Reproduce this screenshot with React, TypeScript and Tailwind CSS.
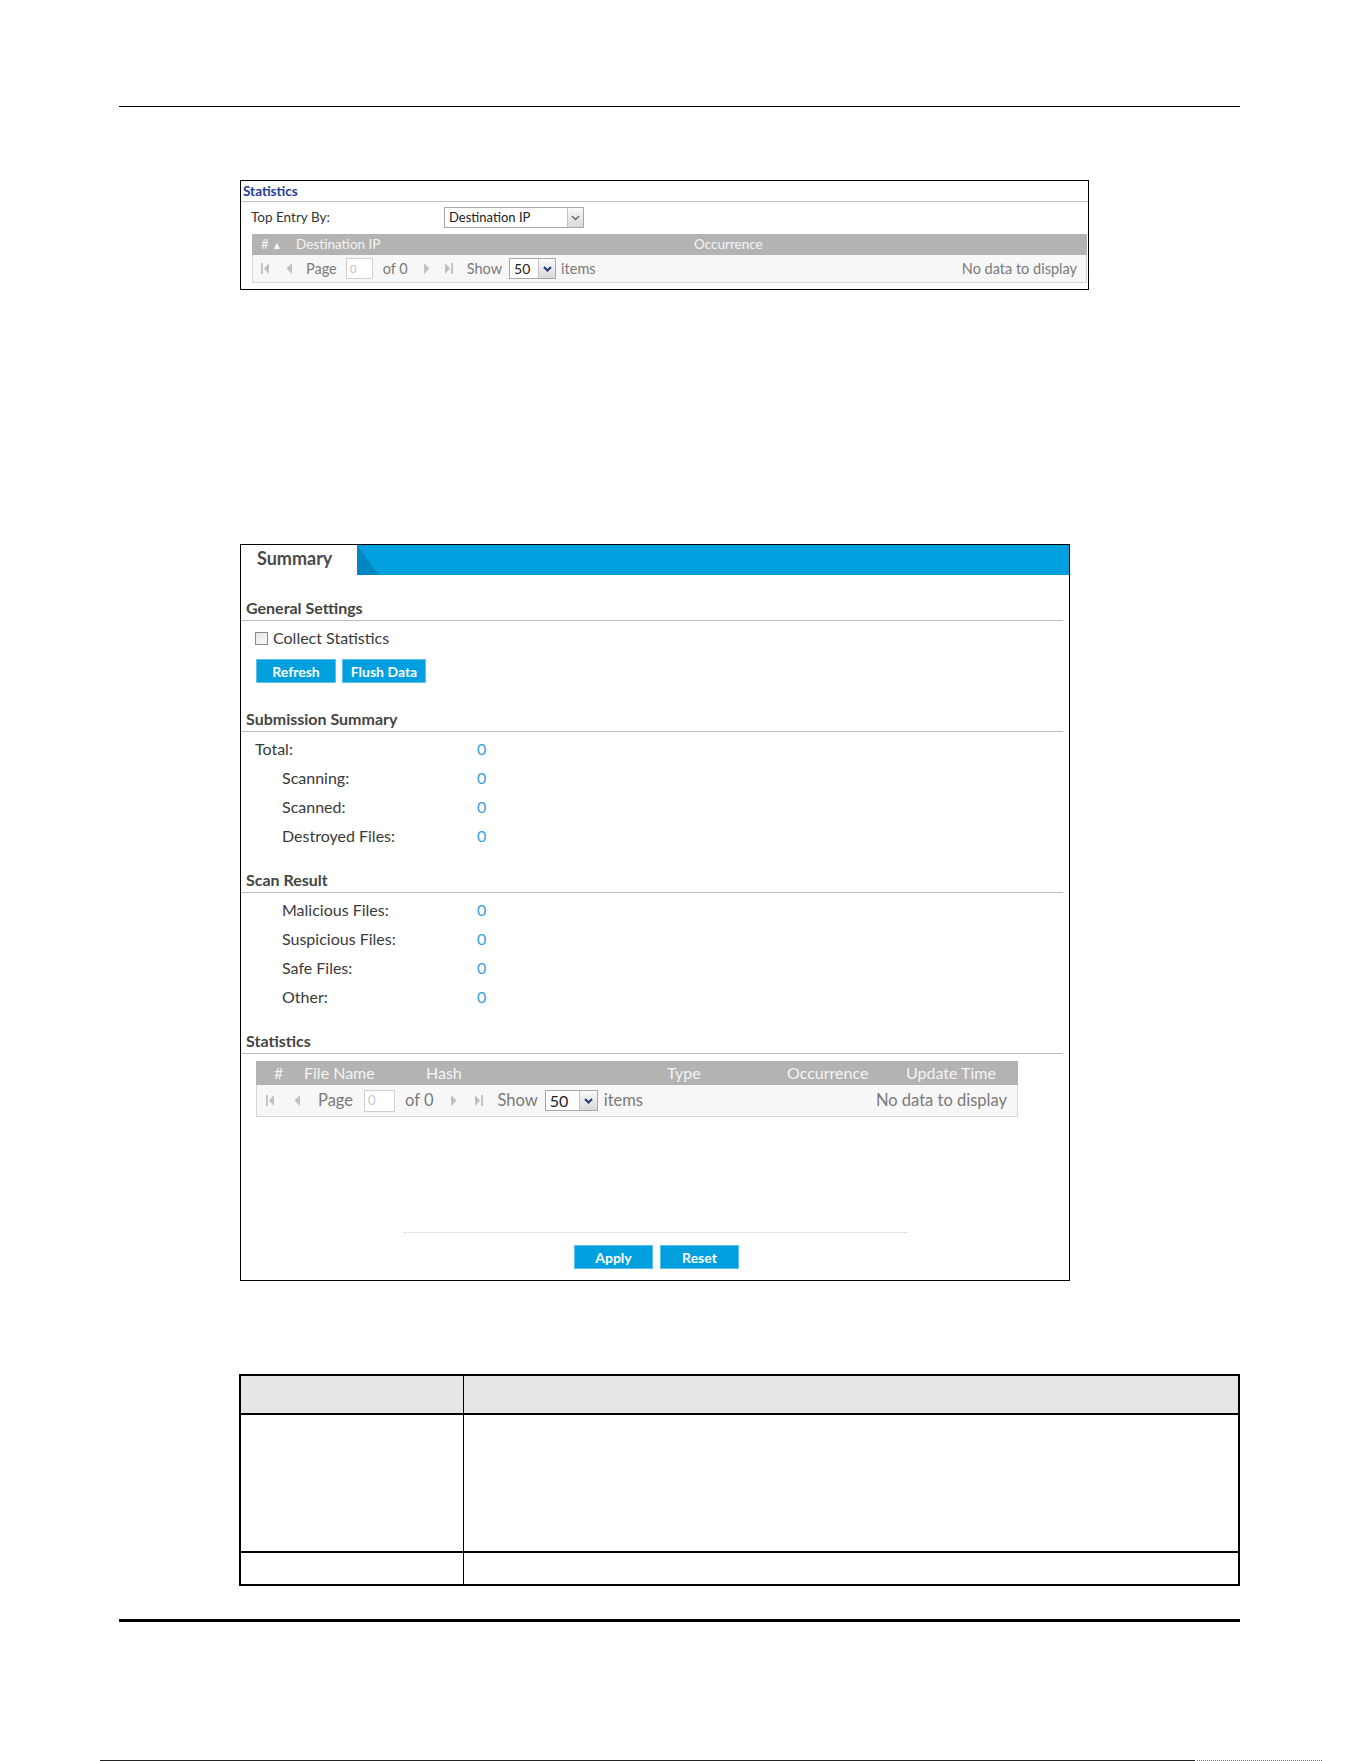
import React from "react";

// Pager arrows, drawn small and greyed out (no data to page through).
function FirstIcon() {
  return (
    <svg width="8" height="11" viewBox="0 0 8 11">
      <rect x="0" y="0" width="1.8" height="11" fill="currentColor" />
      <path d="M8 0 L3 5.5 L8 11 Z" fill="currentColor" />
    </svg>
  );
}
function PrevIcon() {
  return (
    <svg width="6" height="11" viewBox="0 0 6 11">
      <path d="M6 0 L0.5 5.5 L6 11 Z" fill="currentColor" />
    </svg>
  );
}
function NextIcon() {
  return (
    <svg width="6" height="11" viewBox="0 0 6 11">
      <path d="M0 0 L5.5 5.5 L0 11 Z" fill="currentColor" />
    </svg>
  );
}
function LastIcon() {
  return (
    <svg width="8" height="11" viewBox="0 0 8 11">
      <path d="M0 0 L5 5.5 L0 11 Z" fill="currentColor" />
      <rect x="6.2" y="0" width="1.8" height="11" fill="currentColor" />
    </svg>
  );
}

function Chevron({ bold }: { bold?: boolean }) {
  return (
    <svg width="9" height="6" viewBox="0 0 9 6">
      <path
        d="M1 1 L4.5 4.5 L8 1"
        fill="none"
        stroke={bold ? "#1d3a78" : "#55657f"}
        strokeWidth={bold ? 2 : 1.4}
      />
    </svg>
  );
}

// Dropdown look-alike: white field plus a shaded arrow button on the right.
function Select({ value, width, arrow, textSize, bold }: { value: string; width: string; arrow: string; textSize: string; bold?: boolean }) {
  return (
    <div className={`flex h-[21px] items-stretch border border-[#a8a8a8] bg-white ${width}`}>
      <span className={`flex flex-1 items-center pl-[4px] text-[#222] ${textSize}`}>{value}</span>
      <span className={`flex items-center justify-center border-l border-[#c4c4c4] bg-gradient-to-b from-[#fafafa] to-[#d9d9d9] ${arrow}`}>
        <Chevron bold={bold} />
      </span>
    </div>
  );
}

function Pager({ big }: { big?: boolean }) {
  if (big) {
    return (
      <div className="flex h-[32px] items-center border-x border-b border-[#d6d6d6] bg-[#f7f7f7] pr-[10px] text-[16.5px] text-[#7a7a7a]">
        <span className="ml-[9px] text-[#c0c0c0]"><FirstIcon /></span>
        <span className="ml-[20px] text-[#c0c0c0]"><PrevIcon /></span>
        <span className="ml-[18px]">Page</span>
        <span className="ml-[11px] flex h-[22px] w-[31px] items-center border border-[#d0d0d0] bg-white pl-[3px] text-[13px] text-[#c4c4c4]">0</span>
        <span className="ml-[10px]">of 0</span>
        <span className="ml-[18px] text-[#c0c0c0]"><NextIcon /></span>
        <span className="ml-[18px] text-[#c0c0c0]"><LastIcon /></span>
        <span className="ml-[14px]">Show</span>
        <div className="ml-[7px]">
          <Select value="50" width="w-[53px]" arrow="w-[18px]" textSize="text-[16px]" bold />
        </div>
        <span className="ml-[6px]">items</span>
        <span className="ml-auto">No data to display</span>
      </div>
    );
  }
  return (
    <div className="flex h-[28px] items-center border-x border-b border-[#d6d6d6] bg-[#f7f7f7] pr-[9px] text-[14.5px] text-[#7a7a7a]">
      <span className="ml-[8px] text-[#c0c0c0]"><FirstIcon /></span>
      <span className="ml-[17px] text-[#c0c0c0]"><PrevIcon /></span>
      <span className="ml-[14px]">Page</span>
      <span className="ml-[9px] flex h-[21px] w-[27px] items-center border border-[#d0d0d0] bg-white pl-[3px] text-[12px] text-[#c4c4c4]">0</span>
      <span className="ml-[10px]">of 0</span>
      <span className="ml-[16px] text-[#c0c0c0]"><NextIcon /></span>
      <span className="ml-[15px] text-[#c0c0c0]"><LastIcon /></span>
      <span className="ml-[14px]">Show</span>
      <div className="ml-[7px]">
        <Select value="50" width="w-[47px]" arrow="w-[17px]" textSize="text-[14px]" bold />
      </div>
      <span className="ml-[5px]">items</span>
      <span className="ml-auto">No data to display</span>
    </div>
  );
}

function Heading({ children, className }: { children: React.ReactNode; className: string }) {
  return (
    <div className={`mr-[6px] flex h-[25px] items-center border-b border-[#bdbdbd] pl-[5px] text-[16px] font-bold text-[#444] ${className}`}>
      {children}
    </div>
  );
}

function CountRow({ label, sub }: { label: string; sub?: boolean }) {
  return (
    <div className="flex h-[29px] items-center text-[16px] text-[#3a3a3a]">
      <span className={sub ? "w-[236px] pl-[41px]" : "w-[236px] pl-[14px]"}>{label}</span>
      <span className="text-[#3aa1dc]">0</span>
    </div>
  );
}

function BlueButton({ children, width }: { children: React.ReactNode; width: string }) {
  return (
    <button className={`flex h-[24px] items-center justify-center border border-[#5ec0ea] bg-[#00a0de] text-[14px] font-bold text-white ${width}`}>
      {children}
    </button>
  );
}

export default function App() {
  return (
    <div className="h-[1761px] w-[1361px] overflow-hidden bg-white font-['Lato','DejaVu_Sans',sans-serif] text-[#333]">
      <div className="pl-[119px] pt-[106px]">
        <div className="h-px w-[1121px] bg-black" />
      </div>

      {/* Top-entry statistics table */}
      <section className="ml-[240px] mt-[73px] h-[110px] w-[849px] border border-black">
        <div className="h-[21px] border-b border-[#c2c2c2] pl-[2px] text-[13.5px] font-bold leading-[20px] text-[#1f3d9c]">
          Statistics
        </div>
        <div className="mt-[5px] flex h-[21px] items-center pl-[10px]">
          <span className="w-[193px] text-[13.5px] text-[#333]">Top Entry By:</span>
          <Select value="Destination IP" width="w-[140px]" arrow="w-[16px]" textSize="text-[13px]" />
        </div>
        <div className="ml-[11px] mr-px mt-[6px]">
          <div className="flex h-[21px] items-center bg-[#b3b3b3] text-[13.5px] text-[#f4f4f4]">
            <span className="ml-[9px]">#</span>
            <span className="ml-[5px] text-[8px]">▲</span>
            <span className="ml-[16px] w-[398px]">Destination IP</span>
            <span>Occurrence</span>
          </div>
          <Pager />
        </div>
      </section>

      {/* Sandbox summary panel */}
      <section className="ml-[240px] mt-[254px] h-[737px] w-[830px] border border-black">
        <div className="flex h-[30px] bg-[#00a0de]">
          <div className="flex w-[116px] items-start bg-white pl-[16px] text-[18px] font-bold text-[#4a4a4a]">
            Summary
          </div>
          <svg width="22" height="30" viewBox="0 0 22 30">
            <path d="M0 0 L22 30 L0 30 Z" fill="#0086c3" />
          </svg>
        </div>

        <Heading className="mt-[21px]">General Settings</Heading>
        <div className="mt-[6px] flex h-[22px] items-center pl-[14px] text-[16px] text-[#3a3a3a]">
          <span className="h-[13px] w-[13px] border border-[#8a8a8a] bg-gradient-to-br from-[#e6e6e6] to-[#fbfbfb]" />
          <span className="ml-[5px]">Collect Statistics</span>
        </div>
        <div className="mt-[10px] flex gap-[6px] pl-[15px]">
          <BlueButton width="w-[80px]">Refresh</BlueButton>
          <BlueButton width="w-[84px]">Flush Data</BlueButton>
        </div>

        <Heading className="mt-[24px]">Submission Summary</Heading>
        <div className="mt-[2px]">
          <CountRow label="Total:" />
          <CountRow label="Scanning:" sub />
          <CountRow label="Scanned:" sub />
          <CountRow label="Destroyed Files:" sub />
        </div>

        <Heading className="mt-[18px]">Scan Result</Heading>
        <div className="mt-[2px]">
          <CountRow label="Malicious Files:" sub />
          <CountRow label="Suspicious Files:" sub />
          <CountRow label="Safe Files:" sub />
          <CountRow label="Other:" sub />
        </div>

        <Heading className="mt-[18px]">Statistics</Heading>
        <div className="ml-[15px] mt-[7px] w-[762px]">
          <div className="flex h-[24px] items-center bg-[#b3b3b3] text-[16px] text-[#f4f4f4]">
            <span className="w-[48px] pl-[18px]">#</span>
            <span className="w-[122px]">File Name</span>
            <span className="w-[241px]">Hash</span>
            <span className="w-[120px]">Type</span>
            <span className="w-[119px]">Occurrence</span>
            <span>Update Time</span>
          </div>
          <Pager big />
        </div>

        <div className="ml-[163px] mt-[115px] w-[503px] border-t border-dotted border-[#cfcfcf]" />
        <div className="ml-[333px] mt-[12px] flex gap-[7px]">
          <BlueButton width="w-[79px]">Apply</BlueButton>
          <BlueButton width="w-[79px]">Reset</BlueButton>
        </div>
      </section>

      {/* Field description table */}
      <div className="ml-[239px] mt-[93px] w-[1001px] border-2 border-black">
        <div className="grid h-[39px] grid-cols-[223px_1fr] border-b-2 border-black bg-[#e6e6e6]">
          <div className="border-r border-black" />
          <div />
        </div>
        <div className="grid h-[138px] grid-cols-[223px_1fr] border-b-2 border-black">
          <div className="border-r border-black" />
          <div />
        </div>
        <div className="grid h-[31px] grid-cols-[223px_1fr]">
          <div className="border-r border-black" />
          <div />
        </div>
      </div>

      <div className="pl-[119px] pt-[33px]">
        <div className="h-[3px] w-[1121px] bg-black" />
      </div>

      <div className="mt-[138px] flex">
        <div className="ml-[100px] h-px w-[1095px] bg-[#222]" />
        <div className="ml-[2px] h-px w-[125px] border-t border-dotted border-[#6a6a9a]" />
      </div>
    </div>
  );
}
